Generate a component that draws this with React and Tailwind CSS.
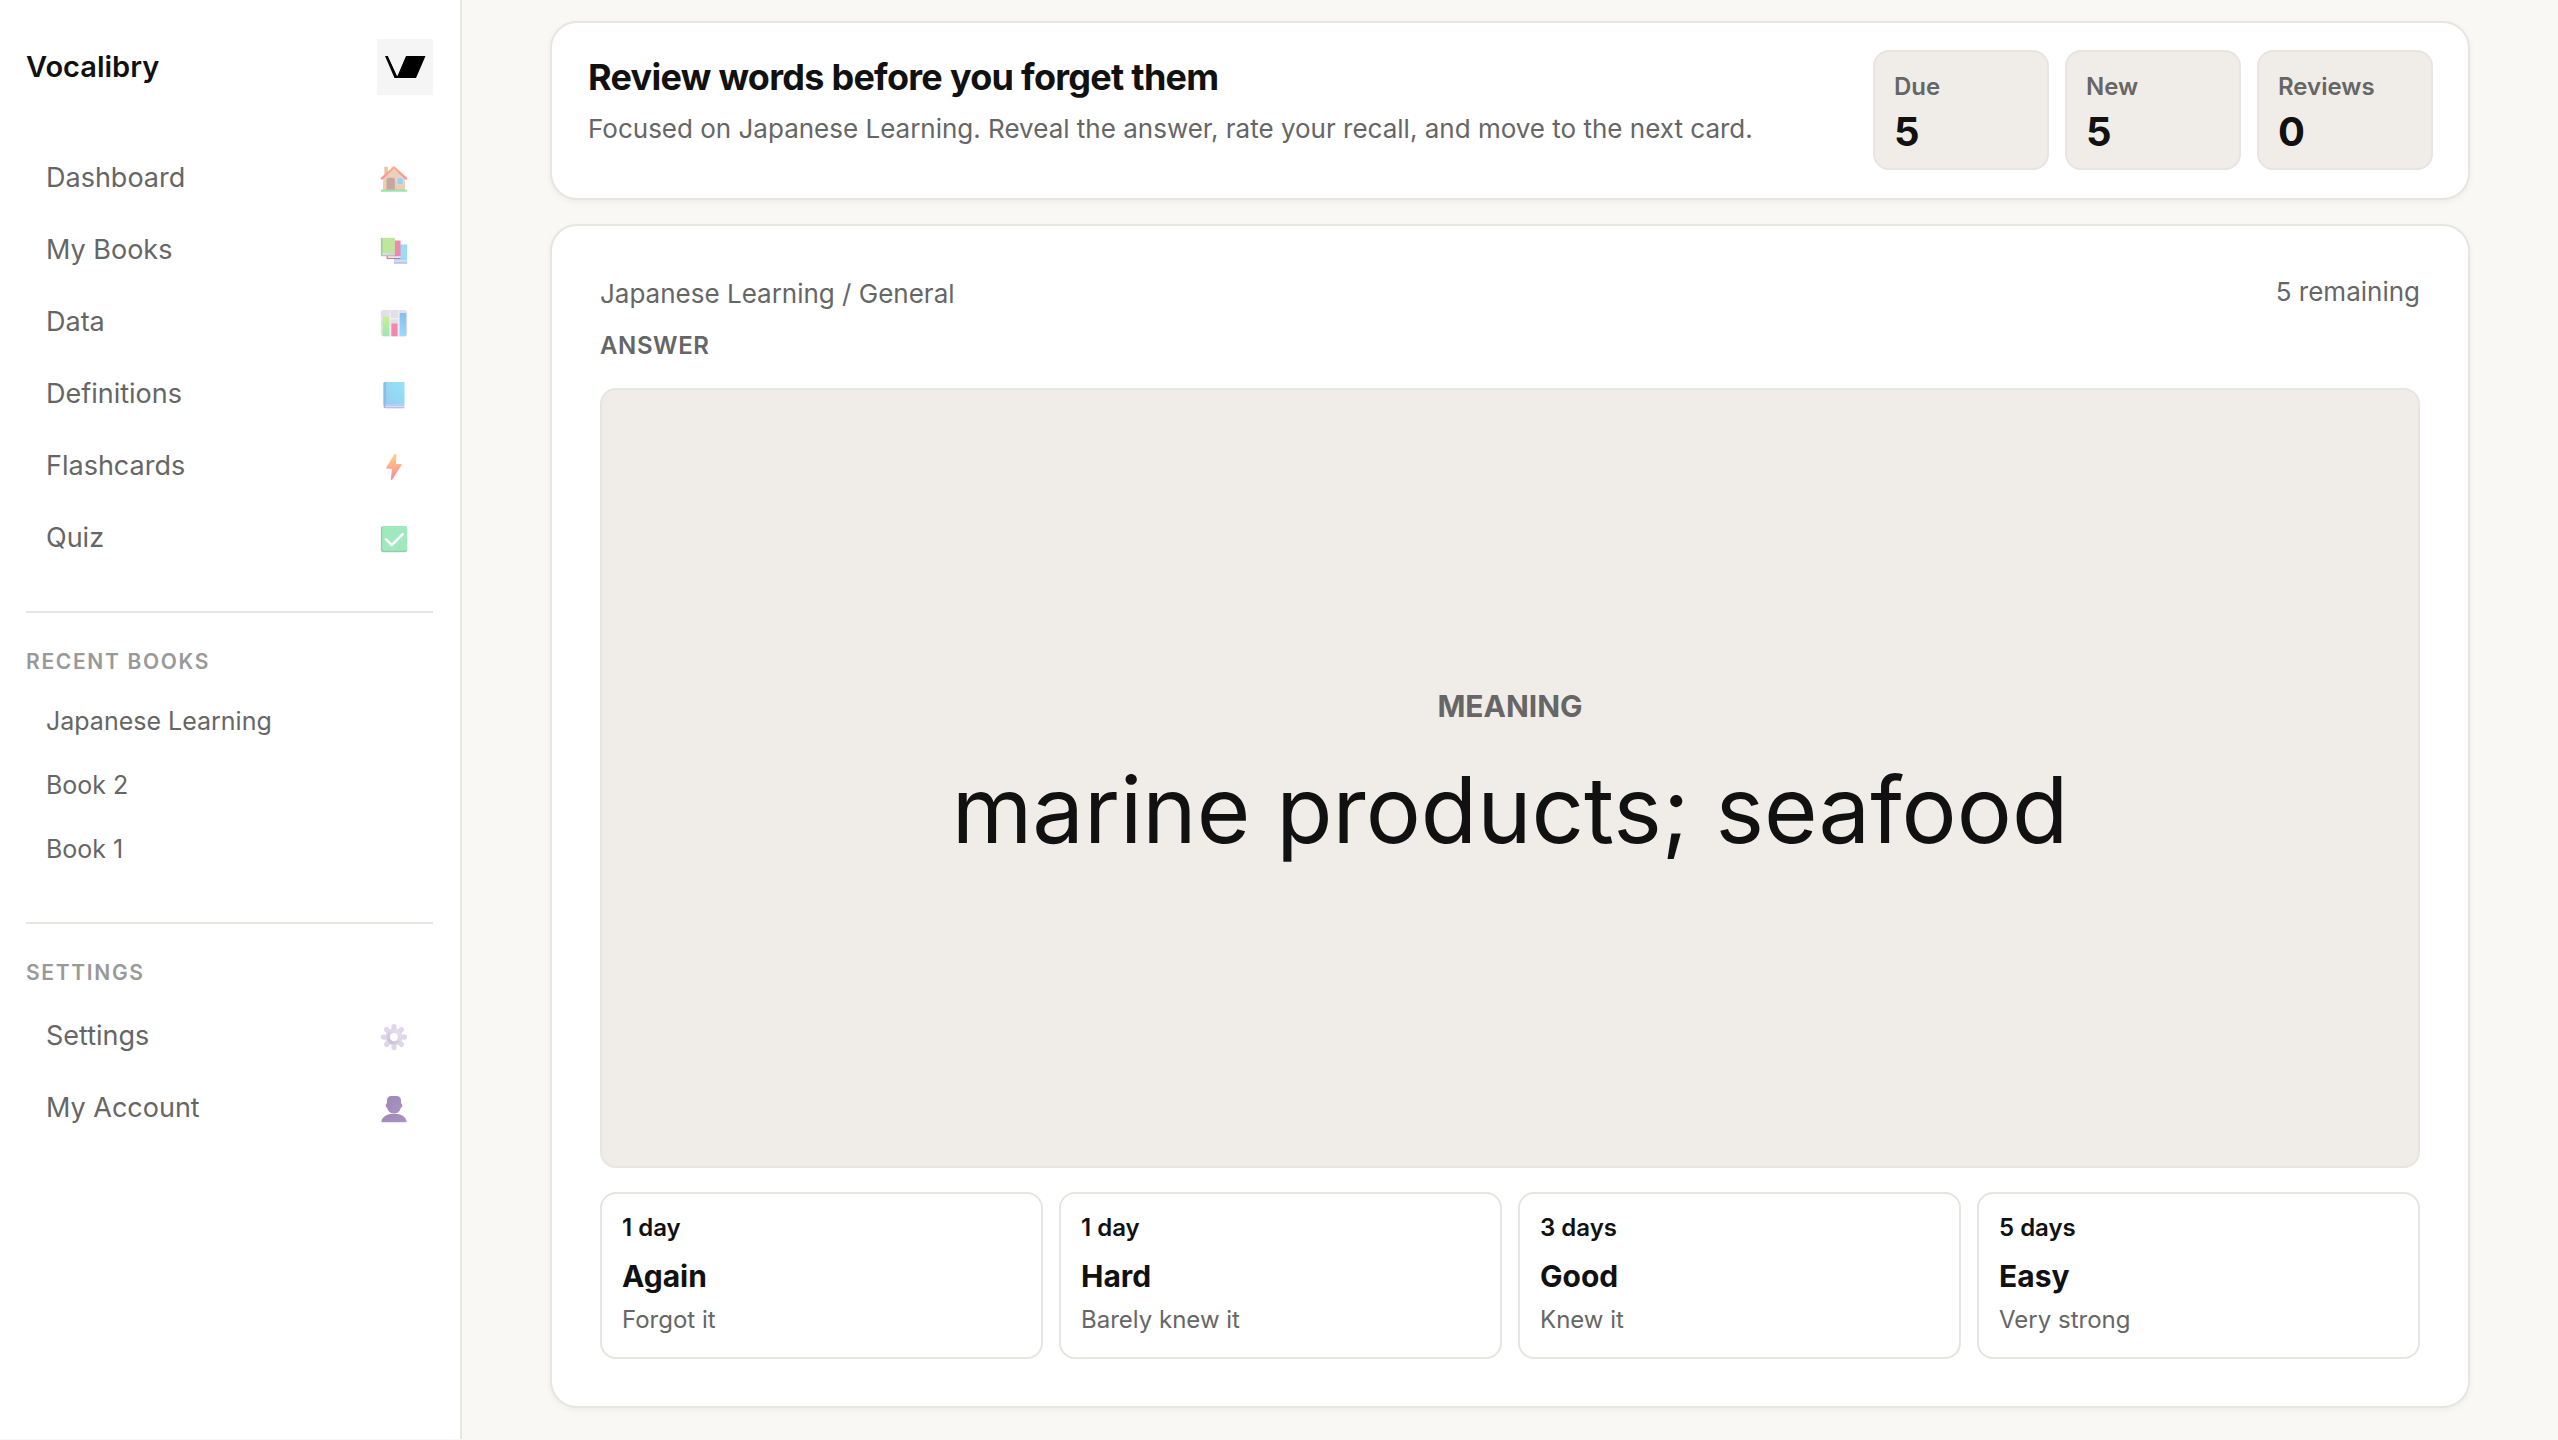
import React from "react";

function HouseIcon() {
  return (
    <svg viewBox="0 0 32 32" className="w-7 h-7" aria-hidden="true">
      <defs>
        <linearGradient id="houseWall" x1="0" y1="0" x2="0" y2="1">
          <stop offset="0" stopColor="#ecd2c0" />
          <stop offset="1" stopColor="#eecbaa" />
        </linearGradient>
        <linearGradient id="houseRoof" x1="0" y1="0" x2="0" y2="1">
          <stop offset="0" stopColor="#ffb08c" />
          <stop offset="1" stopColor="#f2949a" />
        </linearGradient>
      </defs>
      <path d="M5 2h4v10H5z" fill="#e6c4aa" />
      <path d="M16 4 3.500 15v14h25V15z" fill="url(#houseWall)" />
      <path d="M7.500 17c0-1.500.8-2.500 2.500-2.500h4.500c1.700 0 2.500 1 2.500 2.500v11.500H7.500z" fill="#c8a5a0" />
      <path d="M19.500 14.500h7v8h-7z" fill="#96d2f3" stroke="#e9d9d4" strokeWidth="1" />
      <path d="m2 15.500 14-12.700 14 12.700" fill="none" stroke="url(#houseRoof)" strokeWidth="2.600" strokeLinejoin="round" strokeLinecap="round" />
      <path d="M1 30.500v-1.200c0-.8.500-1.300 1.300-1.300h27.400c.8 0 1.300.5 1.300 1.300v1.200z" fill="#98e3b1" />
    </svg>
  );
}

function BooksIcon() {
  return (
    <svg viewBox="0 0 32 32" className="w-7 h-7" aria-hidden="true">
      <path d="M16 8.500h15V27H16z" fill="#98dcf7" />
      <path d="M16 27h15v2.500H16z" fill="#dcd5f2" />
      <path d="M16 29h15v1.500H16z" fill="#9ebcf0" />
      <path d="M9 4h14.500v18H9z" fill="#f187ab" />
      <path d="M9 22h14.500v2H9z" fill="#eeddeb" />
      <path d="M8.500 24h15v1.200h-15z" fill="#d9739b" />
      <path d="M7.500 21.500h1.500v3.500H7.500z" fill="#d9739b" />
      <path d="M1.500 1H17v17.500H1.500z" fill="#bfe79c" />
      <path d="M1 1h2v20H1z" fill="#9fcd9c" />
      <path d="M3 18.500h14v2H3z" fill="#d9dce5" />
      <path d="M1 20.500h15.500V22H1z" fill="#a9cdb4" />
    </svg>
  );
}

function ChartIcon() {
  return (
    <svg viewBox="0 0 32 32" className="w-7 h-7" aria-hidden="true">
      <defs>
        <linearGradient id="barGreen" x1="0" y1="0" x2="0" y2="1">
          <stop offset="0" stopColor="#c6f191" />
          <stop offset="1" stopColor="#a0e4b4" />
        </linearGradient>
        <linearGradient id="barBlue" x1="0" y1="0" x2="0" y2="1">
          <stop offset="0" stopColor="#86bdf0" />
          <stop offset="1" stopColor="#98dcf8" />
        </linearGradient>
      </defs>
      <rect x="1" y="1" width="30" height="30" rx="3" fill="#e3dfe8" />
      <path d="M1 11h30M1 21.500h30M11.500 1v30M21.500 1v30" stroke="#f1eef4" strokeWidth="1.200" />
      <path d="M3 10c0-.8.500-1.300 1.300-1.300h4.900c.8 0 1.300.5 1.300 1.300v21H4a1 1 0 0 1-1-1z" fill="url(#barGreen)" />
      <path d="M13 18c0-.8.500-1.300 1.300-1.300h4.400c.8 0 1.300.5 1.300 1.300v13h-7z" fill="#f288ae" />
      <path d="M22.500 6c0-.8.500-1.300 1.300-1.300h4.900c.8 0 1.300.5 1.300 1.300v24a1 1 0 0 1-1 1h-6.500z" fill="url(#barBlue)" />
    </svg>
  );
}

function BookIcon() {
  return (
    <svg viewBox="0 0 32 32" className="w-7 h-7" aria-hidden="true">
      <defs>
        <linearGradient id="bookCover" x1="1" y1="0" x2="0" y2="1">
          <stop offset="0" stopColor="#96e2f5" />
          <stop offset="1" stopColor="#93cdf5" />
        </linearGradient>
      </defs>
      <path d="M4 3c0-1.200.8-2 2-2h22v26H4z" fill="url(#bookCover)" />
      <path d="M4 3c0-1.200.8-2 2-2h1v26H4z" fill="#8cbfdf" />
      <path d="M5 27.500h22.500v2.700H5z" fill="#e0d9f4" />
      <path d="M4 27h24v1H6v2h22v1H6c-1.200 0-2-.8-2-2z" fill="#96b5e6" />
    </svg>
  );
}

function BoltIcon() {
  return (
    <svg viewBox="0 0 32 32" className="w-7 h-7" aria-hidden="true">
      <defs>
        <linearGradient id="bolt" x1="0" y1="0" x2="0" y2="1">
          <stop offset="0" stopColor="#ffcf86" />
          <stop offset="1" stopColor="#f68c96" />
        </linearGradient>
      </defs>
      <path d="M16.200 1.700 7.300 16.500c-.5.800 0 1.500.8 1.500h5.700l-1.400 11.800c-.1 1.100 1.100 1.500 1.700.6l10.300-16.200c.5-.8 0-1.600-.8-1.600h-5.400l.5-10.300c0-1.200-1.800-1.700-2.500-.6z" fill="url(#bolt)" />
    </svg>
  );
}

function CheckIcon() {
  return (
    <svg viewBox="0 0 32 32" className="w-7 h-7" aria-hidden="true">
      <rect x="1" y="1" width="30" height="30" rx="3" fill="#8dcfa9" />
      <rect x="2.500" y="1" width="28.500" height="28.500" rx="3" fill="#a0e8be" />
      <path d="m7 16.500 6.500 6.500L26 10.500" fill="none" stroke="#fff" strokeWidth="3" strokeLinecap="round" strokeLinejoin="round" />
    </svg>
  );
}

function GearIcon() {
  return (
    <svg viewBox="0 0 32 32" className="w-7 h-7" aria-hidden="true">
      <defs>
        <linearGradient id="gearRing" x1="0" y1="1" x2="1" y2="0">
          <stop offset="0" stopColor="#cbbdd9" />
          <stop offset="1" stopColor="#e6e3e9" />
        </linearGradient>
      </defs>
      <g stroke="#dfd6ea" strokeWidth="6" strokeLinecap="round">
        <path d="M16 4v24M4 16h24M7.500 7.500l17 17M24.500 7.500l-17 17" />
      </g>
      <circle cx="16" cy="16" r="9.500" fill="#dfd6ea" />
      <circle cx="16" cy="16" r="6.500" fill="#fff" stroke="url(#gearRing)" strokeWidth="4" />
    </svg>
  );
}

function UserIcon() {
  return (
    <svg viewBox="0 0 32 32" className="w-7 h-7" aria-hidden="true">
      <defs>
        <linearGradient id="bust" x1="0" y1="0" x2="1" y2="1">
          <stop offset="0" stopColor="#9c8bb0" />
          <stop offset="1" stopColor="#ab90cb" />
        </linearGradient>
      </defs>
      <rect x="6.500" y="9.500" width="19" height="5" rx="2" fill="#a48fbd" />
      <path d="M8 6c0-3 2-5 5-5h6c3 0 5 2 5 5v6.500c0 5-3 8.500-8 8.500s-8-3.500-8-8.500z" fill="url(#bust)" />
      <path d="M1.500 31C2 25 7.500 21.500 16 21.500S30 25 30.500 31z" fill="url(#bust)" />
    </svg>
  );
}

const mainLinks = [
  { label: "Dashboard", Icon: HouseIcon },
  { label: "My Books", Icon: BooksIcon },
  { label: "Data", Icon: ChartIcon },
  { label: "Definitions", Icon: BookIcon },
  { label: "Flashcards", Icon: BoltIcon },
  { label: "Quiz", Icon: CheckIcon },
];

const settingsLinks = [
  { label: "Settings", Icon: GearIcon },
  { label: "My Account", Icon: UserIcon },
];

const recentBooks = ["Japanese Learning", "Book 2", "Book 1"];

const stats = [
  { label: "Due", value: 5 },
  { label: "New", value: 5 },
  { label: "Reviews", value: 0 },
];

const ratings = [
  { interval: "1 day", title: "Again", hint: "Forgot it" },
  { interval: "1 day", title: "Hard", hint: "Barely knew it" },
  { interval: "3 days", title: "Good", hint: "Knew it" },
  { interval: "5 days", title: "Easy", hint: "Very strong" },
];

function NavLinks({ links }) {
  return (
    <ul>
      {links.map(({ label, Icon }) => (
        <li key={label} className="pb-[7px]">
          <a href="#" className="flex items-center justify-between h-[65px] pl-5 pr-[25px] text-[27px] text-[#666666]">
            <span>{label}</span>
            <Icon />
          </a>
        </li>
      ))}
    </ul>
  );
}

function Sidebar() {
  return (
    <aside className="w-[462px] shrink-0 bg-white border-r-2 border-[#e8e6df] pl-[26px] pr-[27px] pt-[39px]">
      <div className="flex items-center justify-between mb-[51px]">
        <span className="pb-px text-[29px] font-semibold text-[#111111]">Vocalibry</span>
        <svg viewBox="0 0 56 56" className="w-14 h-14 bg-[#f5f5f5]" role="img" aria-label="Vocalibry logo">
          <path d="M8 17h3l9 20 9-20h19.500l-9.500 22H17.500z" fill="#000" />
          <path d="M11 17h17.500l-8 20z" fill="#f5f5f5" />
        </svg>
      </div>

      <nav>
        <NavLinks links={mainLinks} />

        {/* Recent books */}
        <div className="mt-[33px] border-t-2 border-[#e8e4df] pt-[33px]">
          <h2 className="text-[21px] leading-8 font-semibold tracking-[0.08em] text-[#999999]">RECENT BOOKS</h2>
          <ul className="mt-3">
            {recentBooks.map((book) => (
              <li key={book}>
                <a href="#" className="flex items-center h-16 pl-5 text-[25px] text-[#666666]">{book}</a>
              </li>
            ))}
          </ul>
        </div>

        {/* Settings */}
        <div className="mt-10 border-t-2 border-[#e8e4df] pt-[33px] pb-8">
          <h2 className="text-[21px] leading-8 font-semibold tracking-[0.08em] text-[#999999] mb-[15px]">SETTINGS</h2>
          <NavLinks links={settingsLinks} />
        </div>
      </nav>
    </aside>
  );
}

function ReviewHeader() {
  return (
    <section className="flex justify-between bg-white border-2 border-[#e8e4df] rounded-[27px] pt-[27px] pb-7 pl-9 pr-[35px] shadow-[0_2px_6px_rgba(0,0,0,0.05)]">
      <div className="pt-[3px]">
        <h1 className="text-[36px] leading-12 font-bold tracking-[-0.02em] text-[#111111]">Review words before you forget them</h1>
        <p className="mt-1 text-[26px] leading-12 text-[#666666]">
          Focused on Japanese Learning. Reveal the answer, rate your recall, and move to the next card.
        </p>
      </div>
      <dl className="flex gap-4">
        {stats.map((stat) => (
          <div key={stat.label} className="w-44 h-[120px] px-[19px] pt-[17px] bg-[#f0ede8] border-2 border-[#e8e4df] rounded-2xl">
            <dt className="text-[24px] leading-9 font-semibold text-[#666666]">{stat.label}</dt>
            <dd className="text-[40px] leading-[54px] font-bold text-[#111111]">{stat.value}</dd>
          </div>
        ))}
      </dl>
    </section>
  );
}

function ReviewCard() {
  return (
    <section className="flex-1 flex flex-col bg-white border-2 border-[#e8e4df] rounded-[27px] px-12 pt-12 pb-[47px] shadow-[0_2px_6px_rgba(0,0,0,0.05)]">
      <div className="flex justify-between text-[26px] text-[#666666]">
        <p className="leading-10">Japanese Learning / General</p>
        <p className="leading-9">5 remaining</p>
      </div>
      <h2 className="mt-3 text-[24px] leading-10 font-semibold tracking-wide text-[#666666]">ANSWER</h2>

      <div className="flex-1 mt-[22px] flex flex-col items-center justify-center bg-[#f0ede8] border-2 border-[#e8e4df] rounded-2xl">
        <p className="text-[30px] leading-10 font-bold text-[#666666]">MEANING</p>
        <p className="mt-6 text-[92px] leading-[120px] text-[#111111]">marine products; seafood</p>
      </div>

      {/* Recall rating */}
      <div className="mt-6 grid grid-cols-4 gap-4">
        {ratings.map((rating) => (
          <button key={rating.title} type="button" className="px-5 pt-4 pb-[19px] text-left bg-white border-2 border-[#e8e4df] rounded-2xl">
            <span className="block text-[24px] leading-9 font-semibold text-[#111111]">{rating.interval}</span>
            <span className="block mt-2 text-[30px] leading-11 font-bold text-[#111111]">{rating.title}</span>
            <span className="block mt-1 text-[24px] leading-9 text-[#666666]">{rating.hint}</span>
          </button>
        ))}
      </div>
    </section>
  );
}

export default function App() {
  return (
    <div className="flex min-h-screen pb-px bg-[#f9f8f5] font-['Inter',sans-serif]">
      <Sidebar />
      <main className="flex-1 flex flex-col pt-[21px] pb-[31px]">
        <div className="w-full max-w-[1920px] mx-auto flex-1 flex flex-col gap-6">
          <ReviewHeader />
          <ReviewCard />
        </div>
      </main>
    </div>
  );
}
